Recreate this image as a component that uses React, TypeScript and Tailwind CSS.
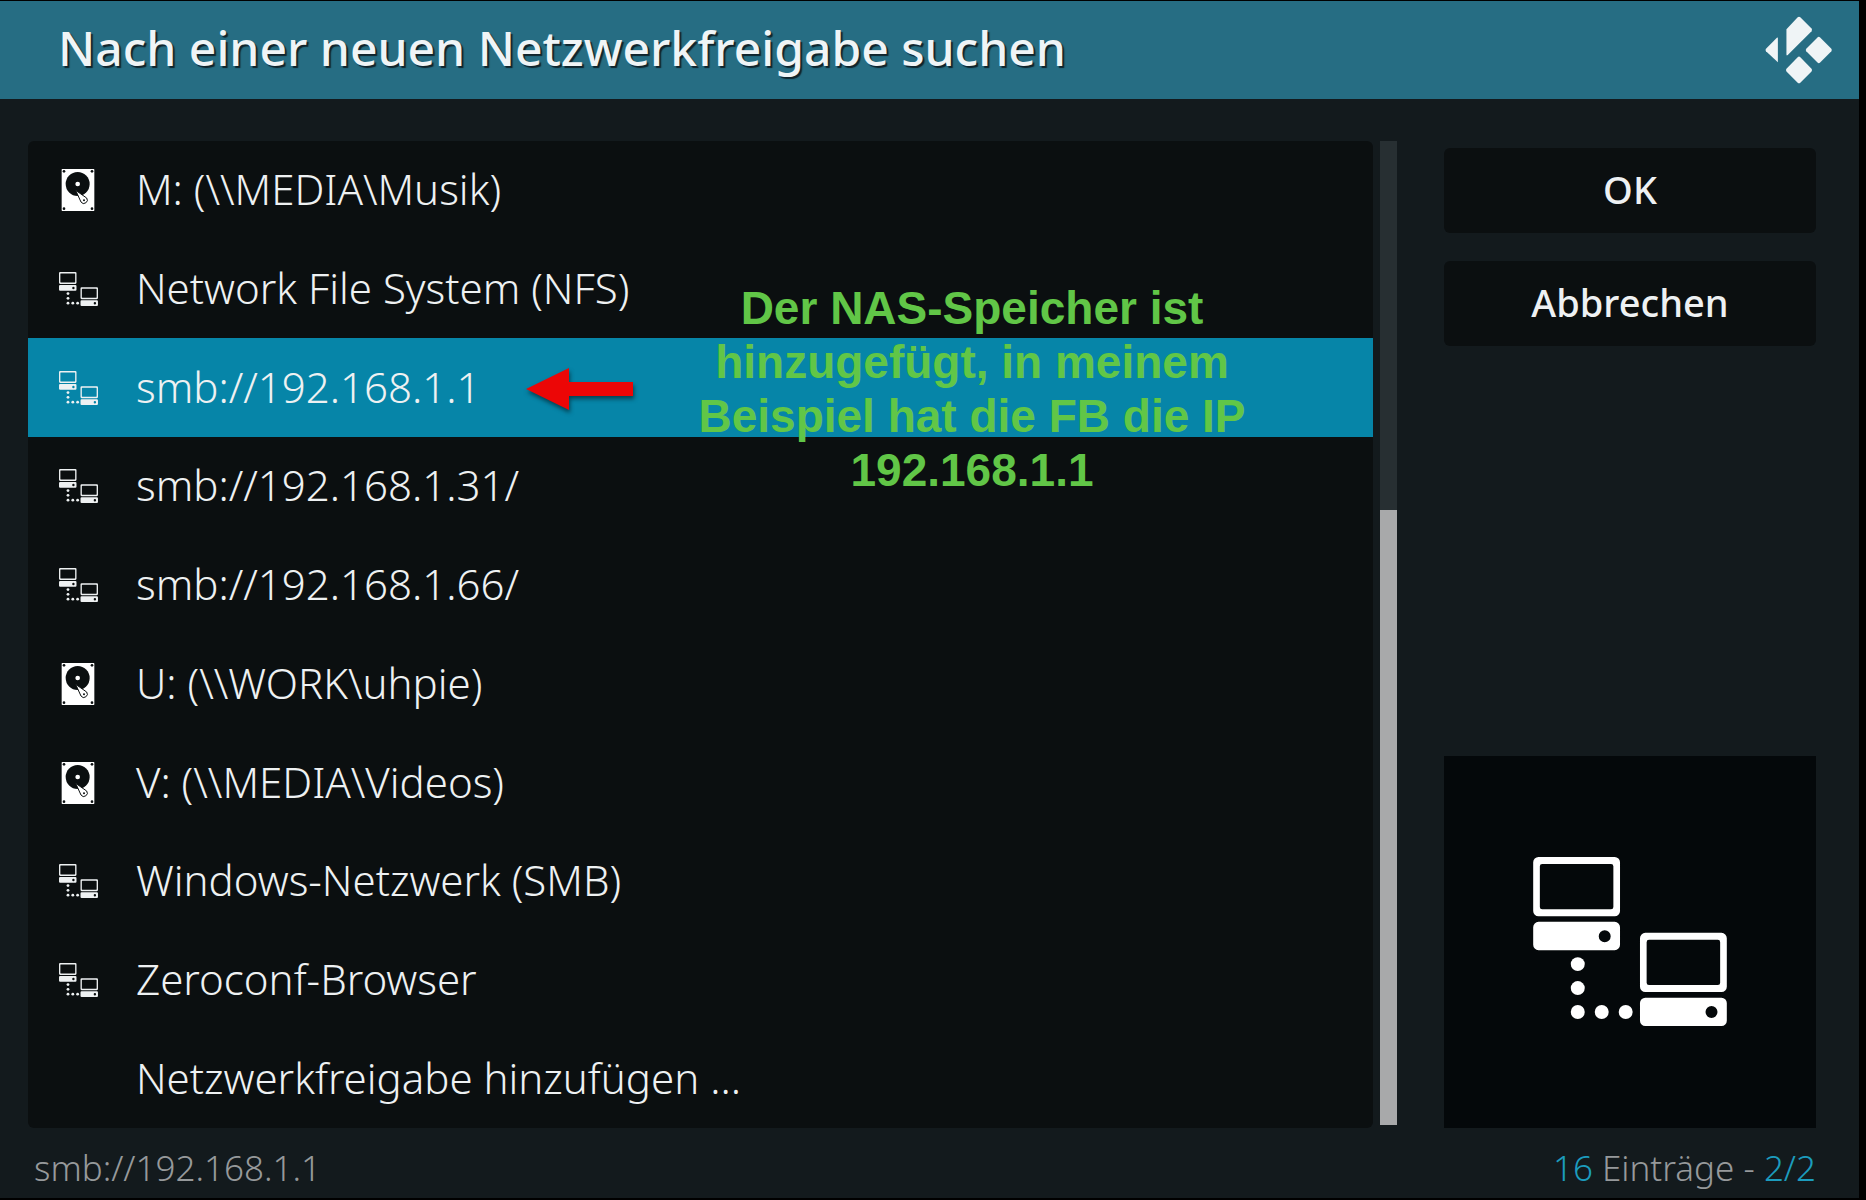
import React from 'react';

type SourceKind = 'disk' | 'network' | 'none';

interface Source {
  label: string;
  kind: SourceKind;
}

const SOURCES: Source[] = [
  { label: 'M: (\\\\MEDIA\\Musik)', kind: 'disk' },
  { label: 'Network File System (NFS)', kind: 'network' },
  { label: 'smb://192.168.1.1', kind: 'network' },
  { label: 'smb://192.168.1.31/', kind: 'network' },
  { label: 'smb://192.168.1.66/', kind: 'network' },
  { label: 'U: (\\\\WORK\\uhpie)', kind: 'disk' },
  { label: 'V: (\\\\MEDIA\\Videos)', kind: 'disk' },
  { label: 'Windows-Netzwerk (SMB)', kind: 'network' },
  { label: 'Zeroconf-Browser', kind: 'network' },
  { label: 'Netzwerkfreigabe hinzufügen ...', kind: 'none' },
];

const SELECTED = 'smb://192.168.1.1';

const Computer: React.FC<{ x: number; y: number }> = ({ x, y }) => (
  <g transform={`translate(${x} ${y})`}>
    <path
      fillRule="evenodd"
      d="M16 0H245a16 16 0 0 1 16 16V162a16 16 0 0 1-16 16H16a16 16 0 0 1-16-16V16A16 16 0 0 1 16 0ZM27 21a7 7 0 0 0-7 7V150a7 7 0 0 0 7 7H234a7 7 0 0 0 7-7V28a7 7 0 0 0-7-7Z"
    />
    <path
      fillRule="evenodd"
      d="M16 195H245a16 16 0 0 1 16 16V264a16 16 0 0 1-16 16H16a16 16 0 0 1-16-16V211a16 16 0 0 1 16-16ZM215 220a18 18 0 1 0 0 36a18 18 0 1 0 0-36Z"
    />
  </g>
);

const NetworkIcon: React.FC<{ className?: string }> = ({ className }) => (
  <svg viewBox="0 0 582 508" fill="currentColor" className={className} aria-hidden="true">
    <Computer x={0} y={0} />
    <Computer x={321} y={228} />
    <circle cx="134" cy="322" r="21" />
    <circle cx="134" cy="394" r="21" />
    <circle cx="134" cy="466" r="21" />
    <circle cx="206" cy="466" r="21" />
    <circle cx="278" cy="466" r="21" />
  </svg>
);

const DiskIcon: React.FC<{ className?: string }> = ({ className }) => (
  <svg viewBox="0 0 98 126" className={className} aria-hidden="true">
    <rect width="98" height="126" rx="2" fill="#fff" />
    <g fill="#0b0f10">
      <circle cx="7" cy="7" r="4" />
      <circle cx="91" cy="7" r="4" />
      <circle cx="7" cy="119" r="4" />
      <circle cx="91" cy="119" r="4" />
      <circle cx="48" cy="45" r="36" />
    </g>
    <circle cx="48" cy="45" r="7" fill="#fff" />
    <path
      d="M42 64L75 87A10 10 0 1 1 58 99Z"
      fill="#fff"
      stroke="#0b0f10"
      strokeWidth="3"
      strokeLinejoin="round"
    />
    <circle cx="67" cy="94" r="3" fill="#0b0f10" />
  </svg>
);

const KodiLogo: React.FC<{ className?: string }> = ({ className }) => (
  <svg viewBox="0 0 204 206" fill="currentColor" className={className} aria-hidden="true">
    <path d="M38 67V140L2 107Q-1 103 2 99L35 66Q38 64 38 67Z" />
    <path d="M64 117V40L98 4Q102 0 106 4L140 38Q143 42 140 46L68 118Q64 121 64 117Z" />
    <path d="M158 65Q162 61 166 65L200 99Q203 103 200 107L166 141Q162 145 158 141L124 107Q121 103 124 99Z" />
    <path d="M98 125Q102 121 106 125L140 160Q143 164 140 168L106 202Q102 206 98 202L64 168Q61 164 64 160Z" />
  </svg>
);

const Annotation: React.FC = () => (
  <>
    <svg
      viewBox="0 0 108 44"
      className="pointer-events-none absolute left-[498px] top-1/2 h-11 w-[108px] -translate-y-1/2 drop-shadow-[1px_3px_2px_rgba(0,0,0,0.5)]"
      aria-hidden="true"
    >
      <path d="M0 23L43 2V16H107V30H43V44Z" fill="#ec0606" />
    </svg>
    <p className="pointer-events-none absolute left-[664px] top-1/2 w-[560px] -translate-y-1/2 pt-0.5 text-center font-['Liberation_Sans',sans-serif] text-[46px] font-bold leading-[54px] text-[#61c647]">
      Der NAS-Speicher ist hinzugefügt, in meinem Beispiel hat die FB die IP 192.168.1.1
    </p>
  </>
);

const SourceRow: React.FC<{ source: Source; selected: boolean }> = ({ source, selected }) => (
  <li className={`relative flex flex-1 ${selected ? 'z-10 bg-[#0685a8]' : ''}`}>
    <button type="button" aria-current={selected} className="flex flex-1 items-center text-left">
      <span className="flex w-[100px] shrink-0 justify-center">
        {source.kind === 'disk' && <DiskIcon className="h-[42px] w-[34px]" />}
        {source.kind === 'network' && <NetworkIcon className="h-[34px] w-[39px]" />}
      </span>
      <span className="pb-0.5 pl-2">{source.label}</span>
    </button>
    {selected && <Annotation />}
  </li>
);

const DialogButton: React.FC<{ children: React.ReactNode }> = ({ children }) => (
  <button type="button" className="h-[85px] rounded-md bg-[#0b0f10] pb-0.5 text-[38px] font-medium text-[#eef1f3]">
    {children}
  </button>
);

const App: React.FC = () => {
  return (
    <div className="flex min-h-screen bg-black pt-px pr-[7px] pb-0.5 font-['Noto_Sans',sans-serif]">
      <div className="flex flex-1 flex-col bg-[#131a1d]">
        <header className="flex h-[98px] items-center justify-between bg-[#266d83] pr-[26px] pl-[58px] text-[#eff4f6]">
          <h1 className="pb-1 text-[48px] font-medium [text-shadow:2px_2px_1px_#10242c]">
            Nach einer neuen Netzwerkfreigabe suchen
          </h1>
          <KodiLogo className="h-[68px] w-[68px]" />
        </header>

        <main className="flex flex-1 pt-[42px] pr-[43px] pl-7">
          <ul className="flex flex-1 flex-col rounded-md bg-[#0b0f10] text-[42px] font-light leading-[56px] text-[#eef1f2]">
            {SOURCES.map((source) => (
              <SourceRow key={source.label} source={source} selected={source.label === SELECTED} />
            ))}
          </ul>
          <div className="mb-[3px] ml-[7px] flex w-[17px] flex-col justify-end bg-[#272f32]">
            <div className="h-[62.5%] bg-[#a8a9aa]" />
          </div>
          <aside className="ml-[47px] flex w-[372px] flex-col gap-7 pt-[7px]">
            <DialogButton>OK</DialogButton>
            <DialogButton>Abbrechen</DialogButton>
            <div className="mt-auto flex aspect-square items-center justify-center bg-[#04080a] pb-0.5 text-white">
              <NetworkIcon className="h-[169px] w-[194px]" />
            </div>
          </aside>
        </main>

        <footer className="flex h-[70px] items-center justify-between pt-2.5 pr-[43px] pl-[34px] text-[35px] font-light text-[#96999b]">
          <span>{SELECTED}</span>
          <span>
            <span className="text-[#1c9cbd]">16</span> Einträge - <span className="text-[#1c9cbd]">2/2</span>
          </span>
        </footer>
      </div>
    </div>
  );
};

export default App;
